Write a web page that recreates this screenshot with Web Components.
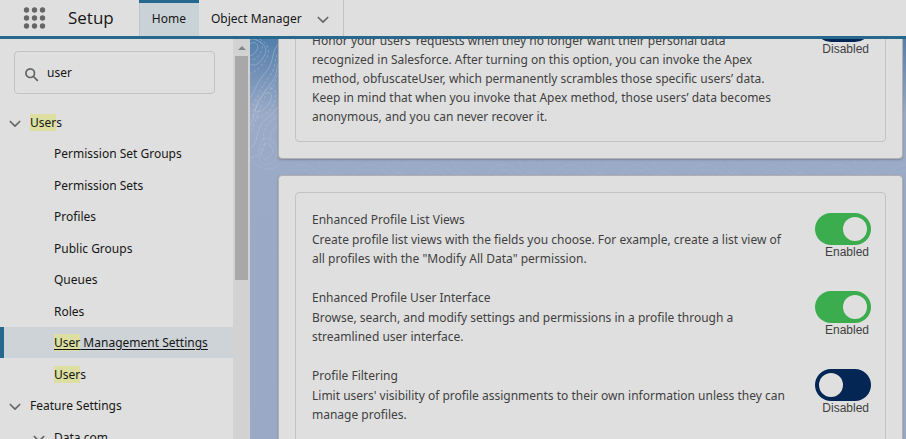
<!DOCTYPE html>
<html lang="en">
<head>
<meta charset="utf-8">
<title>Setup</title>
<style>
html, body { height: 100%; margin: 0; }
body {
  --surface: #dfdfdf; --line: #c3c3c3; --brand: #25678d; --tint: #cdd3d7; --text: #161616; --muted: #3f3f3f;
  font: 12px/19px "Noto Sans", "Open Sans", sans-serif; color: var(--text); background: var(--surface); overflow: hidden;
}
</style>
</head>
<body>
<setup-app></setup-app>
<script>
const define = (name, html, init) => customElements.define(name, class extends HTMLElement {
  connectedCallback() {
    if (this.shadowRoot) return;
    const t = document.createElement('template');
    t.innerHTML = html;
    this.attachShadow({ mode: 'open' }).append(t.content.cloneNode(true));
    if (init) init.call(this, this.shadowRoot);
  }
});

define('chevron-icon', `
<style>:host{display:block;width:12px;height:8px} svg{display:block;width:100%;height:100%}</style>
<svg viewBox="0 0 12 8" fill="none" stroke="#666" stroke-width="1.7" stroke-linecap="round" stroke-linejoin="round"><path d="M1.3 1.5 6 6.1 10.7 1.5"/></svg>`);

define('app-bar', `
<style>
:host{display:flex;height:36px;flex:none;align-items:stretch;background:var(--surface);border-bottom:3px solid var(--brand)}
.waffle,.more{border:0;background:none;padding:0;font:inherit;cursor:pointer;display:flex;align-items:center}
.waffle{margin-left:23px;width:23px}
h1{font:400 17px/36px "Open Sans",sans-serif;margin:0 25px 0 22px}
nav{display:flex}
a{display:flex;align-items:center;color:inherit;text-decoration:none;box-sizing:border-box;border-top:3px solid transparent;padding-bottom:2px}
.on{background:#c9d2d6;border-top-color:var(--brand);padding-left:13px;padding-right:13px;box-shadow:inset 1px 0 #bfc6c9}
.om{padding-left:12px}
.more{padding:3px 14px 0 15px;border-right:1px solid var(--line)}
</style>
<button class="waffle" aria-label="App Launcher"><svg width="23" height="24" viewBox="0 0 23 24" fill="#666"><circle cx="3.5" cy="4" r="2.7"/><circle cx="11.5" cy="4" r="2.7"/><circle cx="19.5" cy="4" r="2.7"/><circle cx="3.5" cy="12" r="2.7"/><circle cx="11.5" cy="12" r="2.7"/><circle cx="19.5" cy="12" r="2.7"/><circle cx="3.5" cy="20" r="2.7"/><circle cx="11.5" cy="20" r="2.7"/><circle cx="19.5" cy="20" r="2.7"/></svg></button>
<h1>Setup</h1>
<nav><a class="on" href="#home">Home</a><a class="om" href="#objects">Object Manager</a></nav>
<button class="more" aria-label="More tabs"><chevron-icon></chevron-icon></button>`);

define('search-box', `
<style>
:host{display:flex;align-items:center;box-sizing:border-box;height:43px;padding:0 10px;border:1px solid var(--line);border-radius:4px;gap:8px}
svg{flex:none;margin-top:4px}
input{flex:1;min-width:0;border:0;outline:0;background:none;padding:0;font:inherit;color:inherit}
</style>
<svg width="14" height="14" viewBox="0 0 14 14" fill="none" stroke="#636363" stroke-width="1.7" stroke-linecap="round"><circle cx="5.2" cy="5.2" r="4.3"/><path d="m8.5 8.5 3.8 3.8"/></svg>
<input type="text" aria-label="Quick Find" value="user">`);

define('nav-item', `
<style>
:host{display:flex;align-items:center;box-sizing:border-box;padding-left:54px}
:host([group]){padding-left:9px}
:host([sub]){padding-left:33px}
chevron-icon{margin:3px 9px 0 0}
:host(:not([group]):not([sub])) chevron-icon{display:none}
:host([active]){background:var(--tint);border-left:4px solid var(--brand);padding-left:50px}
a{color:inherit;text-decoration:none;white-space:nowrap}
:host([active]) a{text-decoration:underline;text-underline-offset:2px}
::slotted(mark){background:#dcdfa0;color:inherit}
</style>
<chevron-icon></chevron-icon><a href="#item"><slot></slot></a>`);

define('scroll-rail', `
<style>
:host{display:flex;flex-direction:column;align-items:center;width:17px;flex:none;background:#d2d2d2}
svg{flex:none;margin:7px 0 6px}
i{width:13px;height:224px;background:#a8a8a8}
</style>
<svg width="8" height="4" viewBox="0 0 8 4"><path d="M4 0 8 4H0z" fill="#848484"/></svg><i></i>`);

define('setup-sidebar', `
<style>
:host{display:flex;flex:0 0 250px;min-height:0;overflow:hidden;background:var(--surface)}
.body{flex:1;min-width:0}
search-box{margin:12px 18px 12px 14px}
nav{display:grid;grid-auto-rows:32px 31px}
</style>
<div class="body"><search-box></search-box>
<nav aria-label="Setup">
<nav-item group><mark>User</mark>s</nav-item>
<nav-item>Permission Set Groups</nav-item>
<nav-item>Permission Sets</nav-item>
<nav-item>Profiles</nav-item>
<nav-item>Public Groups</nav-item>
<nav-item>Queues</nav-item>
<nav-item>Roles</nav-item>
<nav-item active><mark>User</mark> Management Settings</nav-item>
<nav-item><mark>User</mark>s</nav-item>
<nav-item group>Feature Settings</nav-item>
<nav-item sub>Data.com</nav-item>
</nav></div><scroll-rail></scroll-rail>`);

define('toggle-switch', `
<style>
:host{display:block;width:56px;flex:none}
label{display:flex;flex-direction:column;font:12px/14px "Liberation Sans",Arial,sans-serif;text-align:right;color:var(--muted)}
span{padding-right:2px}
input{appearance:none;margin:0;box-sizing:border-box;width:56px;height:32px;border-radius:16px;background:#032655;padding:4px;display:flex}
input::before{content:"";width:24px;height:24px;border-radius:50%;background:var(--surface)}
input:checked{background:#3cad4f;justify-content:flex-end}
</style>
<label><input type="checkbox" role="switch"><span></span></label>`, function (root) {
  const input = root.querySelector('input'), state = root.querySelector('span');
  const show = () => { state.textContent = input.checked ? 'Enabled' : 'Disabled'; };
  input.checked = this.hasAttribute('on');
  input.addEventListener('change', show);
  show();
});

define('setting-row', `
<style>
:host{display:flex;justify-content:space-between;color:var(--muted)}
div{flex:0 1 var(--measure,484px);padding-top:var(--lead,0px)}
toggle-switch{margin-top:3px}
::slotted(h2){font-size:inherit;font-weight:400;line-height:20px;margin:0}
::slotted(p){margin:0}
</style>
<div><slot></slot></div>`, function (root) {
  const toggle = document.createElement('toggle-switch');
  toggle.toggleAttribute('on', this.hasAttribute('on'));
  root.append(toggle);
});

define('settings-card', `
<style>
:host{display:block;background:var(--surface);border:1px solid #b0b0ae;border-radius:4px;padding:16px;box-shadow:0 1px 2px #7d8799}
div{display:flex;flex-direction:column;gap:20px;border:1px solid var(--line);border-radius:4px;padding:17px 14px var(--foot,15px) 16px}
</style>
<div><slot></slot></div>`);

define('contour-art', `
<style>:host{position:absolute;inset:0} svg{width:100%;height:100%;display:block}</style>
<svg fill="none" stroke="#c3d0e0" stroke-opacity=".38" stroke-width="1"></svg>`, function (root) {
  const svg = root.querySelector('svg');
  const add = (d, dash, o) => {
    const p = document.createElementNS('http://www.w3.org/2000/svg', 'path');
    p.setAttribute('d', d);
    if (dash) p.setAttribute('stroke-dasharray', '3 2');
    if (o) p.setAttribute('stroke-opacity', o);
    svg.append(p);
  };
  add('M0 5C5 1 10 6 7 11S1 17 0 16');
  add('M0 1C9-2 15 6 11 13S3 22 0 20', true);
  add('M3 0C15 3 19 11 13 19S4 27 0 25');
  add('M9 0C19 4 21 14 15 22S5 33 0 35', true);
  add('M30 3C20 13 25 23 16 33S6 50 0 59');
  add('M30 11C23 18 28 27 19 38S10 54 2 66 1 77 0 79', true);
  add('M30 21C25 27 29 34 22 43S12 57 7 67 5 79 0 86');
  add('M30 31C24 42 26 45 18 54S9 76 0 94', true);
  add('M16 54C24 51 22 62 17 67S3 77 6 68 12 56 16 54z');
  add('M20 49C30 49 25 65 20 71S1 84 3 72 11 52 20 49z', true);
  add('M30 65C23 76 14 79 10 88S7 104 1 109');
  add('M30 76C18 83 12 89 14 101S10 117 0 119', true);
  add('M30 86C19 91 19 99 21 108', false, '.25');
  add('M14 105C22 103 26 113 19 118S8 113 14 105z', false, '.25');
  add('M14 99C29 98 31 120 20 125S4 113 14 99z', false, '.22');
  add('M0 121C9 129 19 134 29 126', false, '.22');
  for (let x = 35; x < 1600; x += 67) {
    add(`M${x} 139c5-13 19-18 30-8s19 2 26-8`, false, '.16');
    add(`M${x + 8} 139c4-10 15-11 20 0M${x + 34} 119c-2 7 7 17 19 16`, false, '.16');
  }
});

define('settings-pane', `
<style>
:host{display:block;position:relative;flex:1;min-width:0;overflow:hidden;background:linear-gradient(#527fac 0,#708fb6 30px,#9aaac7 75px,#9aaac6 100%)}
.cards{position:relative;display:flex;flex-direction:column;gap:16px;margin:-67px 3px 0 28px}
.first{--lead:24px;--measure:472px}
.last{--foot:48px}
</style>
<contour-art></contour-art>
<div class="cards">
<settings-card class="first"><setting-row><p>Honor your users’ requests when they no longer want their personal data recognized in Salesforce. After turning on this option, you can invoke the Apex method, obfuscateUser, which permanently scrambles those specific users’ data. Keep in mind that when you invoke that Apex method, those users’ data becomes anonymous, and you can never recover it.</p></setting-row></settings-card>
<settings-card class="last">
<setting-row on><h2>Enhanced Profile List Views</h2><p>Create profile list views with the fields you choose. For example, create a list view of all profiles with the "Modify All Data" permission.</p></setting-row>
<setting-row on><h2>Enhanced Profile User Interface</h2><p>Browse, search, and modify settings and permissions in a profile through a streamlined user interface.</p></setting-row>
<setting-row><h2>Profile Filtering</h2><p>Limit users' visibility of profile assignments to their own information unless they can manage profiles.</p></setting-row>
</settings-card>
</div>`);

define('setup-app', `
<style>
:host{display:flex;flex-direction:column;height:100vh}
main{display:flex;flex:1;min-height:0}
</style>
<app-bar></app-bar><main><setup-sidebar></setup-sidebar><settings-pane></settings-pane></main>`);
</script>
</body>
</html>
